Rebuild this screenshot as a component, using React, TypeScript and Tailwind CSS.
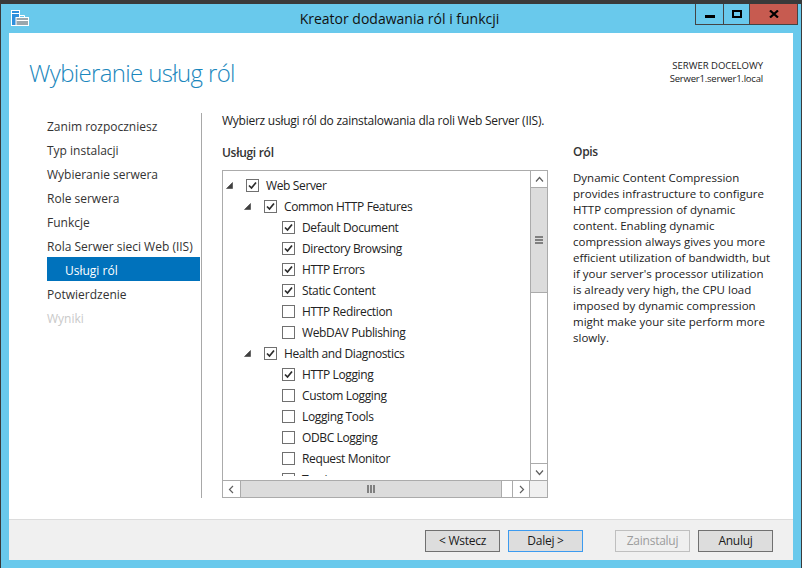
import React from 'react'

const font = "font-['Open_Sans','Noto_Sans',sans-serif]"

type Row = { label: string; level: number; checked: boolean; expander?: boolean }

const rows: Row[] = [
  { label: 'Web Server', level: 0, checked: true, expander: true },
  { label: 'Common HTTP Features', level: 1, checked: true, expander: true },
  { label: 'Default Document', level: 2, checked: true },
  { label: 'Directory Browsing', level: 2, checked: true },
  { label: 'HTTP Errors', level: 2, checked: true },
  { label: 'Static Content', level: 2, checked: true },
  { label: 'HTTP Redirection', level: 2, checked: false },
  { label: 'WebDAV Publishing', level: 2, checked: false },
  { label: 'Health and Diagnostics', level: 1, checked: true, expander: true },
  { label: 'HTTP Logging', level: 2, checked: true },
  { label: 'Custom Logging', level: 2, checked: false },
  { label: 'Logging Tools', level: 2, checked: false },
  { label: 'ODBC Logging', level: 2, checked: false },
  { label: 'Request Monitor', level: 2, checked: false },
  { label: 'Tracing', level: 2, checked: false },
]

const steps = [
  { label: 'Zanim rozpoczniesz' },
  { label: 'Typ instalacji' },
  { label: 'Wybieranie serwera' },
  { label: 'Role serwera' },
  { label: 'Funkcje' },
  { label: 'Rola Serwer sieci Web (IIS)' },
  { label: 'Usługi ról', active: true },
  { label: 'Potwierdzenie' },
  { label: 'Wyniki', disabled: true },
]

const Checkbox = ({ checked }: { checked: boolean }) => (
  <span className="w-[13px] h-[13px] border border-[#707070] bg-white flex items-center justify-center shrink-0">
    {checked && (
      <svg width="9" height="9" viewBox="0 0 9 9" fill="none">
        <path d="M1 4.5 L3.5 7 L8 1.5" stroke="#2b2b2b" strokeWidth="1.7" />
      </svg>
    )}
  </span>
)

const Expander = () => (
  <svg width="7" height="7" viewBox="0 0 7 7" className="shrink-0">
    <path d="M6.5 0.5 V6.5 H0.5 Z" fill="#404040" stroke="#404040" strokeWidth="0.6" />
  </svg>
)

const Chevron = ({ d }: { d: string }) => (
  <svg width="9" height="9" viewBox="0 0 9 9" fill="none">
    <path d={d} stroke="#606060" strokeWidth="1.2" />
  </svg>
)

const TreeRow = ({ row }: { row: Row }) => {
  const left = row.level === 0 ? 'pl-[3px]' : row.level === 1 ? 'pl-[21px]' : 'pl-[59px]'
  return (
    <div className={`h-[21px] flex items-center shrink-0 ${left}`}>
      {row.expander && <Expander />}
      <span className={row.expander ? 'ml-[13px]' : ''}>
        <Checkbox checked={row.checked} />
      </span>
      <span className="ml-[7px] text-[12px] text-[#222] leading-none whitespace-nowrap tracking-[-0.37px]">{row.label}</span>
    </div>
  )
}

const Button = ({ label, variant }: { label: string; variant?: 'focus' | 'disabled' }) => {
  let cls = 'border-[#707070] text-[#1a1a1a] bg-[#dddddd]'
  if (variant === 'focus') cls = 'border-[#3c9bf0] text-[#1a1a1a] bg-[#dddddd]'
  if (variant === 'disabled') cls = 'border-[#bfbfbf] text-[#9c9c9c] bg-[#efefef]'
  return (
    <div className={`w-[75px] h-[22px] border flex items-center justify-center text-[12px] tracking-[-0.25px] ${cls}`}>
      {label}
    </div>
  )
}

export default function App() {
  return (
    <div className={`${font} w-[802px] h-[568px] overflow-hidden bg-[#69c9ec] border-t-4 border-t-[#3a3a3a] border-x border-x-[#3a3a3a] flex flex-col`}>
      {/* title bar */}
      <div className="h-[29px] flex shrink-0 pl-[10px] pr-[3px]">
        <svg width="18" height="18" viewBox="0 0 18 18" className="mt-[6px] shrink-0">
          <rect x="0.5" y="0.5" width="8" height="15" fill="#2f8fdc" stroke="#fff" />
          <rect x="1" y="3" width="7" height="1" fill="#fff" />
          <rect x="5" y="7.5" width="12.5" height="8" fill="#9aa7ad" stroke="#fff" />
          <path d="M8.5 7.5 V5.5 H13.5 V7.5" fill="none" stroke="#fff" />
          <rect x="5.5" y="10" width="11.5" height="1" fill="#fff" />
        </svg>
        <div className="flex-1 text-center text-[14px] leading-[30px] text-[#111] pl-[75px]">
          Kreator dodawania ról i funkcji
        </div>
        <div className="flex h-[21px] border border-t-0 border-[#444] shrink-0">
          <div className="w-[28px] border-r border-[#444] flex items-center justify-center pt-[5px]">
            <div className="w-[10px] h-[3px] bg-black" />
          </div>
          <div className="w-[26px] border-r border-[#444] flex items-center justify-center">
            <div className="w-[10px] h-[8px] border-2 border-black" />
          </div>
          <div className="w-[47px] bg-[#c75b50] flex items-center justify-center">
            <svg width="10" height="8" viewBox="0 0 10 8">
              <path d="M1 0.5 L9 7.5 M9 0.5 L1 7.5" stroke="#000" strokeWidth="2.2" />
            </svg>
          </div>
        </div>
      </div>

      {/* page */}
      <div className="flex-1 ml-[8px] mr-[8px] mb-[8px] bg-white flex flex-col min-h-0">
        <div className="flex-1 flex flex-col min-h-0">
          <div className="h-[80px] shrink-0 flex justify-between pl-[20px] pr-[30px]">
            <h1 className="text-[24px] text-[#1b87bd] font-light leading-none pt-[28px] tracking-[-0.65px]">Wybieranie usług ról</h1>
            <div className="text-right text-[9.5px] leading-[13px] pt-[26px] text-[#222]">
              <div>SERWER DOCELOWY</div>
              <div className="tracking-[-0.2px]">Serwer1.serwer1.local</div>
            </div>
          </div>
          <div className="flex-1 flex min-h-0 pb-[21px]">
            {/* steps */}
            <div className="w-[193px] shrink-0 border-r border-[#a8a8a8] flex flex-col pl-[38px] pr-[1px]">
              {steps.map(s => (
                <div
                  key={s.label}
                  className={`h-[24px] flex items-center pt-[4px] text-[12px] whitespace-nowrap ${
                    s.active
                      ? 'bg-[#0072bc] text-white pl-[18px]'
                      : s.disabled
                        ? 'text-[#c9c9c9]'
                        : 'text-[#333]'
                  }`}
                >
                  {s.label}
                </div>
              ))}
            </div>
            {/* main */}
            <div className="flex-1 flex flex-col pl-[20px] min-w-0">
              <p className="text-[12px] text-[#222] leading-[16px] tracking-[-0.25px]">
                Wybierz usługi ról do zainstalowania dla roli Web Server (IIS).
              </p>
              <div className="flex flex-1 mt-[16px] min-h-0">
                <div className="w-[326px] flex flex-col shrink-0 min-h-0">
                  <div className="text-[12px] font-semibold text-[#333] leading-[16px] tracking-[-0.3px] mb-[9px]">Usługi ról</div>
                  <div className="flex-1 min-h-0 border border-[#ababab] flex flex-col">
                    <div className="flex-1 flex min-h-0">
                      <div className="flex-1 pb-[4px] min-w-0 min-h-0 flex flex-col">
                        <div className="flex-1 overflow-hidden flex flex-col pt-[4px] min-h-0">
                          {rows.map(r => (
                            <TreeRow key={r.label} row={r} />
                          ))}
                        </div>
                      </div>
                      {/* vertical scrollbar */}
                      <div className="w-[17px] shrink-0 border-l border-[#ababab] flex flex-col">
                        <div className="h-[17px] shrink-0 flex items-center justify-center border-b border-[#ababab]">
                          <Chevron d="M1 6.5 L4.5 2.5 L8 6.5" />
                        </div>
                        <div className="h-[105px] shrink-0 bg-[#dcdcdc] border-b border-[#ababab] flex flex-col items-center justify-center gap-[1px]">
                          <div className="w-[8px] h-[2px] bg-[#808080]" />
                          <div className="w-[8px] h-[2px] bg-[#808080]" />
                          <div className="w-[8px] h-[2px] bg-[#808080]" />
                        </div>
                        <div className="flex-1" />
                        <div className="h-[17px] shrink-0 flex items-center justify-center border-t border-[#ababab]">
                          <Chevron d="M1 2.5 L4.5 6.5 L8 2.5" />
                        </div>
                      </div>
                    </div>
                    {/* horizontal scrollbar */}
                    <div className="h-[17px] shrink-0 flex border-t border-[#ababab]">
                      <div className="w-[17px] shrink-0 flex items-center justify-center">
                        <Chevron d="M6 1 L2.5 4.5 L6 8" />
                      </div>
                      <div className="w-[262px] shrink-0 bg-[#dcdcdc] border-x border-[#ababab] flex items-center justify-center gap-[1px]">
                        <div className="w-[2px] h-[8px] bg-[#808080]" />
                        <div className="w-[2px] h-[8px] bg-[#808080]" />
                        <div className="w-[2px] h-[8px] bg-[#808080]" />
                      </div>
                      <div className="flex-1 border-r border-[#ababab]" />
                      <div className="w-[17px] shrink-0 border-r border-[#ababab] flex items-center justify-center">
                        <Chevron d="M3 1 L6.5 4.5 L3 8" />
                      </div>
                      <div className="w-[17px] shrink-0 bg-[#f0f0f0]" />
                    </div>
                  </div>
                </div>
                <div className="flex-1 pl-[25px] pr-[20px] min-w-0 -mt-[1px]">
                  <div className="text-[12px] font-semibold text-[#333] leading-[16px] tracking-[-0.3px] mb-[10px]">Opis</div>
                  <p className="text-[11.5px] text-[#222] leading-[16px] w-[198px]">
                    Dynamic Content Compression provides infrastructure to configure HTTP compression of dynamic content. Enabling dynamic compression always gives you more efficient utilization of bandwidth, but if your server's processor utilization is already very high, the CPU load imposed by dynamic compression might make your site perform more slowly.
                  </p>
                </div>
              </div>
            </div>
          </div>
        </div>
        {/* footer */}
        <div className="h-[41px] shrink-0 bg-[#f0f0f0] border-t border-[#dcdcdc] flex items-center pl-[416px] pt-[1px]">
          <Button label="< Wstecz" />
          <div className="ml-[8px]">
            <Button label="Dalej >" variant="focus" />
          </div>
          <div className="ml-[32px]">
            <Button label="Zainstaluj" variant="disabled" />
          </div>
          <div className="ml-[8px]">
            <Button label="Anuluj" />
          </div>
        </div>
      </div>
    </div>
  )
}
